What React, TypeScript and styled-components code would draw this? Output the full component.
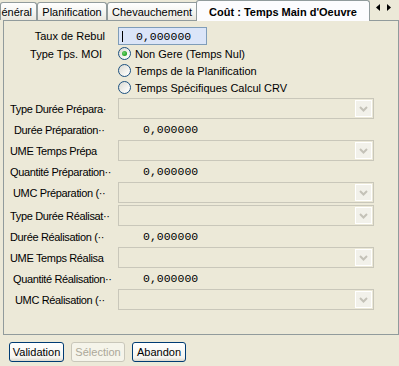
import styled, { createGlobalStyle } from 'styled-components'

const GlobalStyle = createGlobalStyle`
   html, body {
      margin: 0;
      padding: 0;
      background: #ece9d8;
   }
   body {
      font-family: "Liberation Sans", Arial, sans-serif;
      font-size: 11px;
      color: #000;
   }
`

const Window = styled.div`
   width: 399px;
   height: 366px;
   display: flex;
   flex-direction: column;
   overflow: hidden;
   background: #ece9d8;
`

const TabStrip = styled.div`
   height: 20px;
   display: flex;
   align-items: flex-end;
   position: relative;
   z-index: 1;
`

type TabProps = {
   $active?: boolean,
   $width: number,
   $shift?: number,
   $align?: 'flex-start' | 'center' | 'flex-end',
}

const Tab = styled.div<TabProps>`
   box-sizing: border-box;
   flex: none;
   width: ${p => p.$width}px;
   height: ${p => p.$active ? 21 : 18}px;
   margin-left: ${p => p.$shift ?? 0}px;
   margin-bottom: ${p => p.$active ? -1 : 0}px;
   border: 1px solid #919b9c;
   border-bottom: none;
   border-radius: 3px 3px 0 0;
   background: ${p => p.$active
      ? '#fcfcfe'
      : 'linear-gradient(#ffffff, #f4f4f0 55%, #e9e7df)'};
   font-weight: ${p => p.$active ? 700 : 400};
   position: relative;
   z-index: ${p => p.$active ? 2 : 1};
   display: flex;
   align-items: center;
   justify-content: ${p => p.$align ?? 'center'};
   padding: ${p => p.$active ? '1px 0 0' : '0 4px'};
   white-space: nowrap;
   overflow: hidden;
`

const Scroller = styled.div`
   flex: none;
   display: flex;
   align-items: center;
   gap: 7px;
   height: 20px;
   padding-left: 6px;
   align-self: flex-start;
   margin-top: -3px;
`

const Panel = styled.div`
   box-sizing: border-box;
   margin-left: 3px;
   width: 396px;
   height: 315px;
   border: 1px solid #919b9c;
   display: flex;
   flex-direction: column;
`

type RowProps = {
   $h: number,
   $top?: number,
}

const Row = styled.div<RowProps>`
   display: flex;
   align-items: center;
   height: ${p => p.$h}px;
   margin-top: ${p => p.$top ?? 0}px;
   flex: none;
`

type LabelProps = {
   $right?: boolean,
   $pad: number,
}

const Label = styled.div<LabelProps>`
   box-sizing: border-box;
   flex: none;
   width: 114px;
   white-space: nowrap;
   text-align: ${p => p.$right ? 'right' : 'left'};
   letter-spacing: ${p => p.$right ? 0 : -0.35}px;
   padding-left: ${p => p.$right ? 0 : p.$pad}px;
   padding-right: ${p => p.$right ? p.$pad : 0}px;
`

const Spacer = styled.div`
   width: 114px;
   flex: none;
`

const NumberInput = styled.div`
   box-sizing: border-box;
   width: 89px;
   height: 18px;
   border: 1px solid #7f9db9;
   background: #dbe5f8;
   display: flex;
   align-items: center;
   padding-left: 3px;
   font-family: "Liberation Mono", monospace;
   font-size: 11.5px;
`

const Caret = styled.span`
   width: 1px;
   height: 11px;
   background: #000;
   margin-right: 13px;
`

const Radio = styled.label`
   display: flex;
   align-items: center;
   gap: 4px;
`

const RadioCircle = styled.span<{ $checked?: boolean }>`
   box-sizing: border-box;
   width: 13px;
   height: 13px;
   border-radius: 50%;
   border: 1px solid #1c5180;
   background: linear-gradient(135deg, #d9d9d2, #f7f7f4 70%, #ffffff);
   display: flex;
   align-items: center;
   justify-content: center;

   &::after {
      content: '';
      display: ${p => p.$checked ? 'block' : 'none'};
      width: 5px;
      height: 5px;
      border-radius: 50%;
      background: radial-gradient(circle at 40% 40%, #6fd46f, #21a121 70%);
   }
`

const Combo = styled.div`
   box-sizing: border-box;
   width: 256px;
   height: 21px;
   border: 1px solid #c9c7ba;
   padding: 1px;
   display: flex;
   justify-content: flex-end;
`

const ComboButton = styled.div`
   box-sizing: border-box;
   width: 17px;
   height: 17px;
   border: 1px solid #ffffff;
   background: #f2f1ea;
   display: flex;
   align-items: center;
   justify-content: center;
`

const Value = styled.div`
   padding-left: 25px;
   font-family: "Liberation Mono", monospace;
   font-size: 11.5px;
`

const ButtonBar = styled.div`
   display: flex;
   gap: 7px;
   padding: 7px 0 0 9px;
`

const Button = styled.button<{ $width: number }>`
   box-sizing: border-box;
   width: ${p => p.$width}px;
   height: 20px;
   padding: 0;
   border: 1px solid #003c74;
   border-radius: 3px;
   background: linear-gradient(#ffffff, #f5f4ef 80%, #dcd8cd);
   font-family: "Liberation Sans", Arial, sans-serif;
   font-size: 11px;
   color: #000;

   &:disabled {
      border-color: #c9c7ba;
      background: #f5f4ea;
      color: #aca899;
   }
`

function Chevron() {
   return (
      <svg width="9" height="6" viewBox="0 0 9 6">
         <path d="M1 1 L4.5 4.5 L8 1" fill="none" stroke="#c4c2b8" strokeWidth="2" />
      </svg>
   )
}

function Arrow(props: { dir: 'left' | 'right' }) {
   return (
      <svg width="4" height="7" viewBox="0 0 4 7">
         {props.dir === 'left'
            ? <path d="M4 0 L0 3.5 L4 7 Z" fill="#000" />
            : <path d="M0 0 L4 3.5 L0 7 Z" fill="#000" />}
      </svg>
   )
}

type Field =
   | { kind: 'combo', label: string, pad: number, top?: number }
   | { kind: 'value', label: string, pad: number }

const fields: Field[] = [
   { kind: 'combo', label: 'Type Durée Prépara·', pad: 6, top: 2 },
   { kind: 'value', label: 'Durée Préparation··', pad: 10 },
   { kind: 'combo', label: 'UME Temps Prépa', pad: 6 },
   { kind: 'value', label: 'Quantité Préparation··', pad: 6 },
   { kind: 'combo', label: 'UMC Préparation (··', pad: 9 },
   { kind: 'combo', label: 'Type Durée Réalisat··', pad: 6, top: 2 },
   { kind: 'value', label: 'Durée Réalisation (··', pad: 6 },
   { kind: 'combo', label: 'UME Temps Réalisa', pad: 6 },
   { kind: 'value', label: 'Quantité Réalisation··', pad: 9 },
   { kind: 'combo', label: 'UMC Réalisation (··', pad: 11 },
]

const radios = [
   { label: 'Non Gere (Temps Nul)', checked: true },
   { label: 'Temps de la Planification', checked: false },
   { label: 'Temps Spécifiques Calcul CRV', checked: false },
]

export default function App() {
   return (
      <Window>
         <GlobalStyle />
         <TabStrip>
            <Tab $width={37} $align="flex-end">énéral</Tab>
            <Tab $width={70}>Planification</Tab>
            <Tab $width={93} $align="flex-start">Chevauchement</Tab>
            <Tab $width={174} $shift={-4} $active>Coût : Temps Main d'Oeuvre</Tab>
            <Scroller>
               <Arrow dir="left" />
               <Arrow dir="right" />
            </Scroller>
         </TabStrip>
         <Panel>
            <Row $h={18} $top={6}>
               <Label $right $pad={13}>Taux de Rebul</Label>
               <NumberInput><Caret />0,000000</NumberInput>
            </Row>
            {radios.map((r, i) => (
               <Row $h={17} key={r.label}>
                  {i === 0
                     ? <Label $right $pad={16}>Type Tps. MOI</Label>
                     : <Spacer />}
                  <Radio>
                     <RadioCircle $checked={r.checked} />
                     {r.label}
                  </Radio>
               </Row>
            ))}
            {fields.map(f => (
               <Row $h={21} $top={f.kind === 'combo' ? f.top : 0} key={f.label}>
                  <Label $pad={f.pad}>{f.label}</Label>
                  {
                     f.kind === 'combo'
                     ? <Combo><ComboButton><Chevron /></ComboButton></Combo>
                     : <Value>0,000000</Value>
                  }
               </Row>
            ))}
         </Panel>
         <ButtonBar>
            <Button $width={55}>Validation</Button>
            <Button $width={54} disabled>Sélection</Button>
            <Button $width={54}>Abandon</Button>
         </ButtonBar>
      </Window>
   )
}
